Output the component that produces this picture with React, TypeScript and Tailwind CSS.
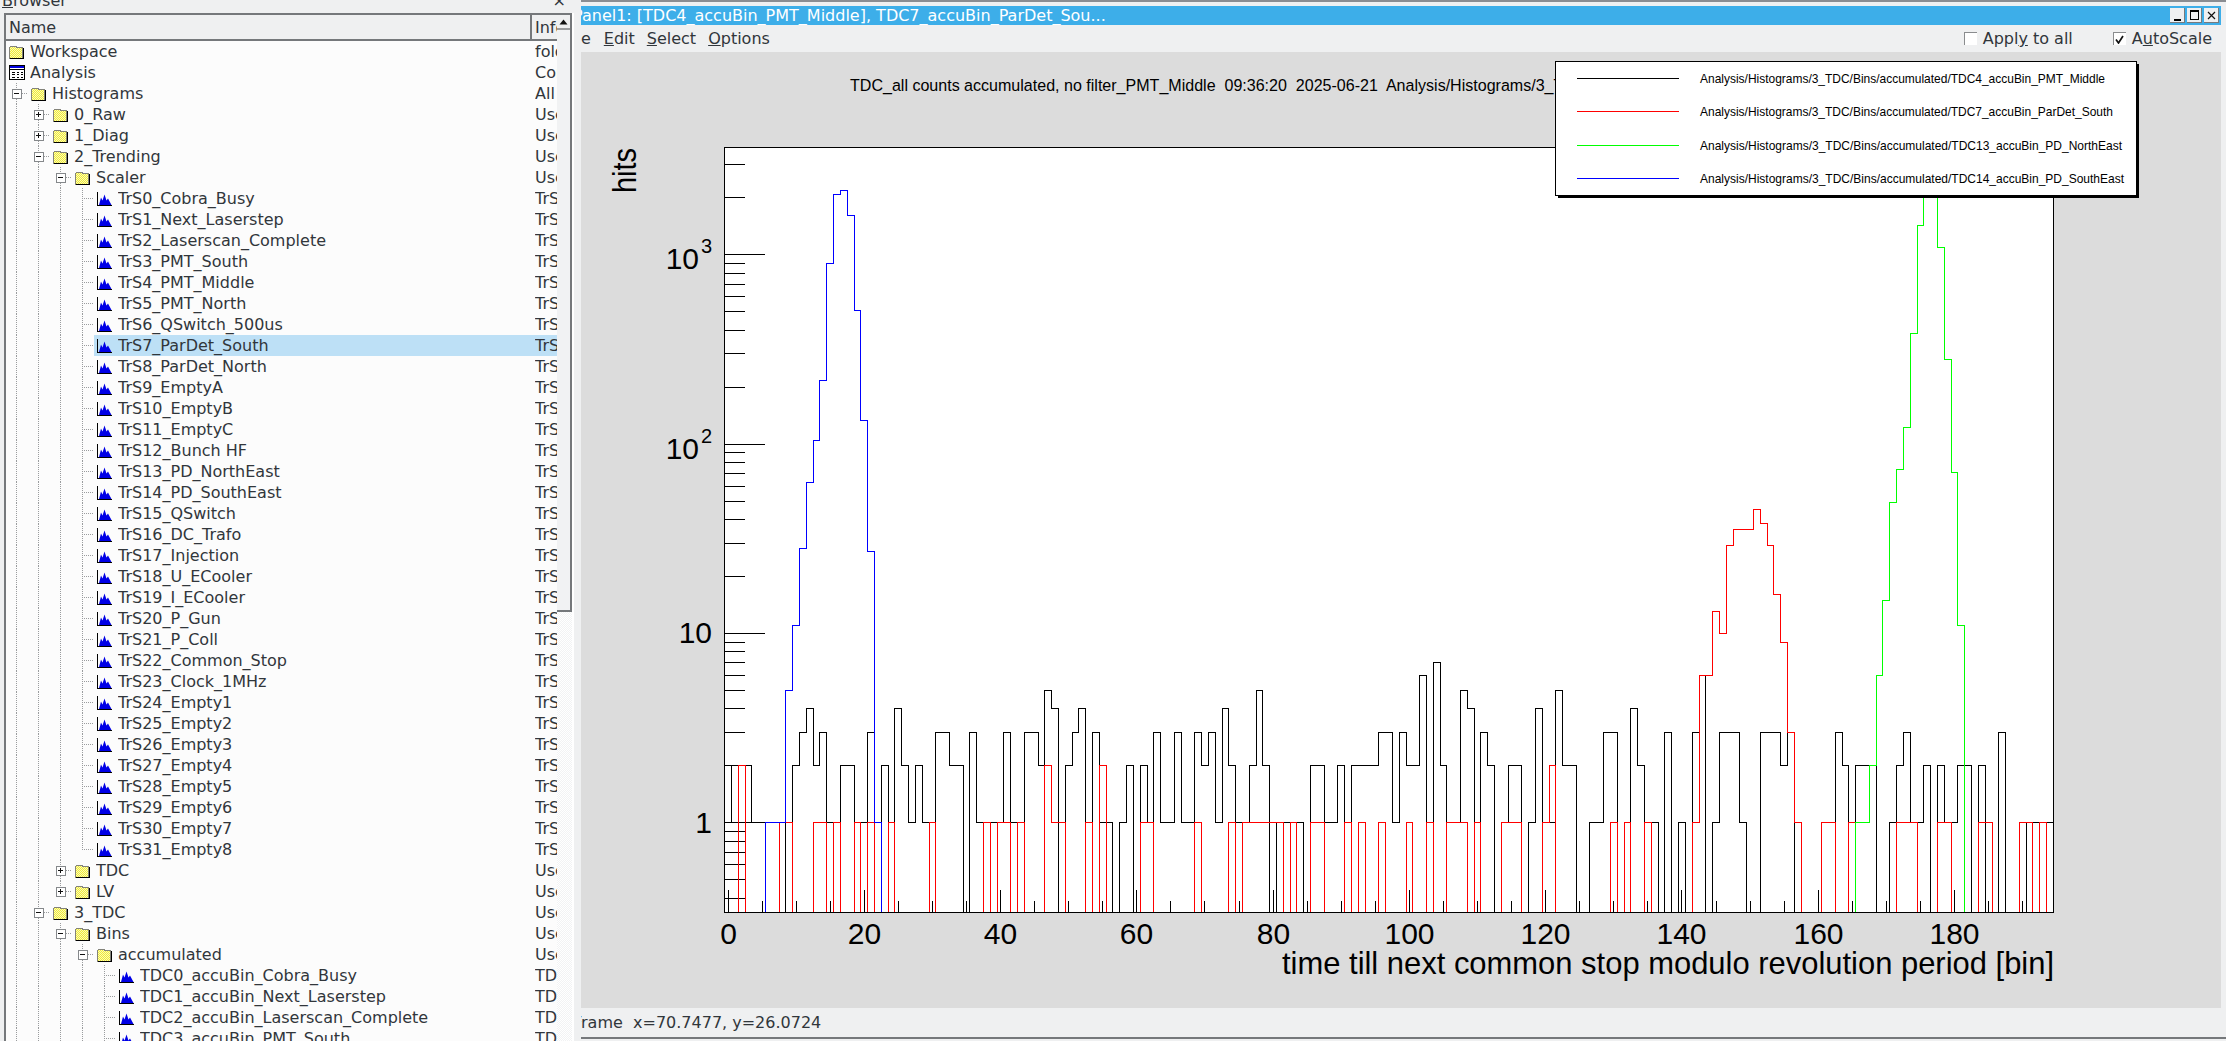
import React from "react";

type Row = { name: string; info: string; level: number; kind: "folder" | "table" | "hist"; exp?: "+" | "-"; sel?: boolean };

const trsNames = ["TrS0_Cobra_Busy","TrS1_Next_Laserstep","TrS2_Laserscan_Complete","TrS3_PMT_South","TrS4_PMT_Middle","TrS5_PMT_North","TrS6_QSwitch_500us","TrS7_ParDet_South","TrS8_ParDet_North","TrS9_EmptyA","TrS10_EmptyB","TrS11_EmptyC","TrS12_Bunch HF","TrS13_PD_NorthEast","TrS14_PD_SouthEast","TrS15_QSwitch","TrS16_DC_Trafo","TrS17_Injection","TrS18_U_ECooler","TrS19_I_ECooler","TrS20_P_Gun","TrS21_P_Coll","TrS22_Common_Stop","TrS23_Clock_1MHz","TrS24_Empty1","TrS25_Empty2","TrS26_Empty3","TrS27_Empty4","TrS28_Empty5","TrS29_Empty6","TrS30_Empty7","TrS31_Empty8"];
const tdcNames = ["TDC0_accuBin_Cobra_Busy","TDC1_accuBin_Next_Laserstep","TDC2_accuBin_Laserscan_Complete","TDC3_accuBin_PMT_South"];

const rows: Row[] = [
  { name: "Workspace", info: "folder", level: 0, kind: "folder" },
  { name: "Analysis", info: "Configuration", level: 0, kind: "table" },
  { name: "Histograms", info: "All", level: 1, kind: "folder", exp: "-" },
  { name: "0_Raw", info: "User", level: 2, kind: "folder", exp: "+" },
  { name: "1_Diag", info: "User", level: 2, kind: "folder", exp: "+" },
  { name: "2_Trending", info: "User", level: 2, kind: "folder", exp: "-" },
  { name: "Scaler", info: "User", level: 3, kind: "folder", exp: "-" },
  ...trsNames.map((n): Row => ({ name: n, info: n, level: 4, kind: "hist", sel: n === "TrS7_ParDet_South" })),
  { name: "TDC", info: "User", level: 3, kind: "folder", exp: "+" },
  { name: "LV", info: "User", level: 3, kind: "folder", exp: "+" },
  { name: "3_TDC", info: "User", level: 2, kind: "folder", exp: "-" },
  { name: "Bins", info: "User", level: 3, kind: "folder", exp: "-" },
  { name: "accumulated", info: "User", level: 4, kind: "folder", exp: "-" },
  ...tdcNames.map((n): Row => ({ name: n, info: n, level: 5, kind: "hist" })),
];

function continues(i: number, j: number) {
  for (let k = i + 1; k < rows.length; k++) {
    if (rows[k].level < j) return false;
    if (rows[k].level === j) return true;
  }
  return true;
}

function Guide({ i }: { i: number }) {
  const r = rows[i];
  if (r.level === 0) return null;
  const w = 22 * r.level;
  const lines: React.ReactNode[] = [];
  for (let j = 1; j <= r.level; j++) {
    const x = 22 * j - 12 + 0.5;
    const more = continues(i, j);
    if (j < r.level) {
      if (more) lines.push(<line key={j} x1={x} x2={x} y1={0} y2={21} />);
    } else {
      lines.push(<line key={j} x1={x} x2={x} y1={0} y2={more ? 21 : 10.5} />);
    }
  }
  const cx = 22 * r.level - 12;
  return (
    <svg width={w} height={21} className="shrink-0">
      <g stroke="#9a9c9e" strokeWidth={1} strokeDasharray="1 1" shapeRendering="crispEdges">
        {lines}
        <line x1={cx} x2={w} y1={10.5} y2={10.5} />
      </g>
      {r.exp && (
        <g shapeRendering="crispEdges">
          <rect x={cx - 4} y={6} width={9} height={9} fill="#fff" stroke="#85888b" />
          <line x1={cx - 2} x2={cx + 3} y1={10.5} y2={10.5} stroke="#111" />
          {r.exp === "+" && <line x1={cx + 0.5} x2={cx + 0.5} y1={8} y2={13} stroke="#111" />}
        </g>
      )}
    </svg>
  );
}

function FolderIcon() {
  return (
    <svg width={15} height={14} viewBox="0 0 15 14" className="shrink-0" shapeRendering="crispEdges">
      <defs>
        <pattern id="dither" width={2} height={2} patternUnits="userSpaceOnUse">
          <rect width={2} height={2} fill="#eeea3c" />
          <rect width={1} height={1} fill="#fdfbb4" />
          <rect x={1} y={1} width={1} height={1} fill="#fdfbb4" />
        </pattern>
      </defs>
      <path d="M0.5 13V2.5L2 1H6.5L8 2.5H13.5V13Z" fill="url(#dither)" stroke="#83837a" />
      <path d="M1 13.5H14.5V3" fill="none" stroke="#000" />
      <path d="M0 14H15V13H15" fill="none" stroke="#000" />
    </svg>
  );
}

function TableIcon() {
  return (
    <svg width={16} height={15} viewBox="0 0 16 15" className="shrink-0" shapeRendering="crispEdges">
      <rect x={0.5} y={0.5} width={15} height={14} fill="#fff" stroke="#000" />
      <rect x={1} y={1} width={14} height={2} fill="#0000e0" />
      <path d="M1 4.5H15M2.5 7H6M7.5 7H10M11.5 7H14M2.5 9.5H6M7.5 9.5H10M11.5 9.5H14M2.5 12H6M7.5 12H10M11.5 12H14" stroke="#000" />
    </svg>
  );
}

function HistIcon() {
  return (
    <svg width={15} height={14} viewBox="0 0 15 14" className="shrink-0">
      <path d="M2 13L4 5.5L5.5 8.5L7.5 2.5L9.5 8.5L11 6.5L14.5 13Z" fill="#0000e6" />
      <path d="M0.5 0V13.5H15" fill="none" stroke="#000" shapeRendering="crispEdges" />
    </svg>
  );
}

function TreeRow({ i }: { i: number }) {
  const r = rows[i];
  return (
    <div className="flex h-[21px] shrink-0">
      <Guide i={i} />
      <div className={"flex min-w-0 flex-1 items-center pl-[3px] " + (r.sel ? "bg-[#bde0f6]" : "")}>
        <div className="mr-[6px] flex w-[15px] shrink-0 items-center">
          {r.kind === "folder" && <FolderIcon />}
          {r.kind === "table" && <TableIcon />}
          {r.kind === "hist" && <HistIcon />}
        </div>
        <div className="min-w-0 flex-1 overflow-hidden whitespace-nowrap">{r.name}</div>
        <div className="w-[22px] shrink-0 overflow-hidden whitespace-nowrap">{r.info}</div>
      </div>
    </div>
  );
}

function Browser() {
  return (
    <div className="flex w-[581px] shrink-0 flex-col bg-[#eff0f1]">
      <div className="flex h-[13px] shrink-0 items-end justify-between overflow-hidden pl-[2px] pr-[15px] leading-[16px]">
        <span className="relative -top-[4px]"><u>B</u>rowser</span>
        <span className="relative -top-[4px]">×</span>
      </div>
      <div className="flex min-h-0 flex-1">
        <div className="ml-[4px] flex min-h-0 w-[568px] border-l-2 border-t-2 border-[#75787b]">
          <div className="flex min-h-0 w-[551px] flex-col overflow-hidden bg-[#fcfcfc]">
            <div className="flex h-[26px] shrink-0 border-b-2 border-[#75787b] bg-[#eff0f1]">
              <div className="flex w-[524px] items-center pl-[3px]">Name</div>
              <div className="flex flex-1 items-center overflow-hidden whitespace-nowrap border-l-2 border-[#75787b] pl-[3px]">Info</div>
            </div>
            {rows.map((_, i) => <TreeRow key={i} i={i} />)}
          </div>
          <div className="flex w-[15px] shrink-0 flex-col">
            <div className="flex h-[597px] shrink-0 flex-col border-b-2 border-r-2 border-[#75787b] bg-[#f1f2f3]">
              <div className="flex h-[15px] items-center justify-center border-b-2 border-[#9a9c9e] bg-[#eff0f1]">
                <svg width={9} height={6}><path d="M0.5 5.5L4.5 0.5L8.5 5.5Z" fill="#111" /></svg>
              </div>
            </div>
            <div className="flex-1 bg-[repeating-conic-gradient(#ffffff_0_25%,#f2f3f4_0_50%)] bg-[length:2px_2px]" />
          </div>
        </div>
        <div className="w-[2px] shrink-0 bg-white" />
      </div>
    </div>
  );
}

function CheckOpt({ label, under, rest, checked }: { label: string; under: string; rest: string; checked?: boolean }) {
  return (
    <div className="flex items-center gap-[6px]">
      <span className="flex h-[13px] w-[13px] items-center justify-center border-l border-t border-[#8a8c8e] bg-white">
        {checked && <svg width={9} height={9}><path d="M1 4.5L3.5 8L8 1" fill="none" stroke="#111" strokeWidth={1.7} /></svg>}
      </span>
      <span className="whitespace-pre">{label}<u>{under}</u>{rest}</span>
    </div>
  );
}

// histogram data -------------------------------------------------------------
const blackData = [2,2,2,2,1,1,1,1,1,0,2,3,4,2,3,1,1,2,2,1,
1,3,1,2,1,4,2,1,2,1,1,3,3,2,2,0,3,1,1,1,
1,3,1,1,3,3,2,5,4,0,2,3,4,1,3,1,1,0,1,2,
0,2,1,3,1,1,3,1,1,3,2,3,1,4,2,1,1,2,5,2,
0,1,1,1,1,0,2,2,1,1,2,1,2,2,2,2,3,3,1,3,
2,2,6,1,7,2,1,1,5,4,1,3,2,0,1,2,2,0,1,4,
1,1,5,2,2,0,0,1,1,3,3,0,1,4,2,1,1,0,3,0,
1,0,3,6,0,1,3,3,3,1,0,0,3,3,3,2,3,0,0,0,
0,1,1,3,2,0,2,2,2,0,0,1,2,3,1,1,2,0,2,1,
1,2,2,0,2,0,0,3,0,0,0,1,1,1,1];

const fromMap = (m: Record<number, number>) => Array.from({ length: 195 }, (_, k) => m[k] ?? 0);

const redData = fromMap({2:2,8:1,9:1,13:1,14:1,16:1,19:1,21:1,24:1,30:1,38:1,40:1,41:1,43:1,47:2,48:1,49:1,53:1,55:2,61:1,62:1,69:1,74:1,76:1,77:1,78:1,79:1,80:1,81:1,83:1,86:1,87:1,91:1,93:1,96:1,100:1,103:1,106:1,107:1,108:1,110:1,114:1,115:1,116:1,120:1,121:2,130:1,132:1,135:1,142:1,143:6,144:6,145:13,146:10,147:29,148:35.5,149:35.5,150:35.5,151:45,152:38,153:29,154:16,155:9,156:3,157:1,161:1,162:1,165:1,172:1,173:1,174:1,178:1,179:1,184:1,185:1,190:1,191:1,193:1});
const greenData = fromMap({166:1,167:1,168:2,169:6,170:15,171:49,172:73.5,173:122,174:384,175:1430,176:3500,177:3500,178:1095,179:280,180:71,181:11});
const blueData = fromMap({6:1,7:1,8:1,9:5,10:11,11:28,12:62.8,13:104,14:217,15:898,16:2082,17:2180,18:1609,19:507,20:134,21:27,22:1});

const L = 724.5, R = 2053.5, T = 147.5, B = 912.5;
const ex = (k: number) => Math.round(724.1 + 6.814 * k) + 0.5;
const yv = (v: number) => (v <= 0 ? 930 : Math.round(822.3 - 189.3 * Math.log10(v)) + 0.5);
const tx = (v: number) => Math.round(727.5 + 6.814 * v) + 0.5;

function histPath(d: number[]) {
  let p = `M${ex(0)} ${yv(d[0])}`;
  for (let k = 0; k < 195; k++) {
    p += `H${ex(k + 1)}`;
    if (k < 194) p += `V${yv(d[k + 1])}`;
  }
  return p;
}

function Chart() {
  const xTicks: React.ReactNode[] = [];
  for (let v = 0; v <= 190; v += 5) {
    const big = v % 20 === 0;
    xTicks.push(<line key={v} x1={tx(v)} x2={tx(v)} y1={B} y2={B - (big ? 23 : 12)} />);
  }
  const yTicks: React.ReactNode[] = [];
  const addY = (v: number, big: boolean) => {
    const y = yv(v);
    yTicks.push(<line key={v} x1={L} x2={L + (big ? 40 : 20)} y1={y} y2={y} />);
  };
  [0.4, 0.5, 0.6, 0.7, 0.8, 0.9].forEach((v) => addY(v, false));
  [1, 10, 100, 1000].forEach((d) => {
    addY(d, true);
    for (let m = 2; m <= 9; m++) if (d * m <= 3000) addY(d * m, false);
  });
  const labels = [0, 20, 40, 60, 80, 100, 120, 140, 160, 180];
  const legend = [
    { y: 78.5, c: "#000000", t: "Analysis/Histograms/3_TDC/Bins/accumulated/TDC4_accuBin_PMT_Middle", w: 405 },
    { y: 111.5, c: "#ff0000", t: "Analysis/Histograms/3_TDC/Bins/accumulated/TDC7_accuBin_ParDet_South", w: 413 },
    { y: 145.5, c: "#00ff00", t: "Analysis/Histograms/3_TDC/Bins/accumulated/TDC13_accuBin_PD_NorthEast", w: 422 },
    { y: 178.5, c: "#0000ff", t: "Analysis/Histograms/3_TDC/Bins/accumulated/TDC14_accuBin_PD_SouthEast", w: 424 },
  ];
  return (
    <svg viewBox="581 52 1640 956" width={1640} height={956} className="block font-['Liberation_Sans',sans-serif]">
      <rect x={581} y={52} width={1640} height={956} fill="#dcdcdc" />
      <rect x={L} y={T} width={R - L} height={B - T} fill="#fff" />
      <text x={850} y={91} fontSize={17} fill="#000" className="whitespace-pre" transform="translate(850 91) scale(0.945 1) translate(-850 -91)">
        {"TDC_all counts accumulated, no filter_PMT_Middle  09:36:20  2025-06-21  Analysis/Histograms/3_TDC/Bins/accumulated/TDC4_accuBin_PMT_Middle"}
      </text>
      <clipPath id="plot"><rect x={L} y={T} width={R - L} height={B - T} /></clipPath>
      <g stroke="#000" strokeWidth={1} shapeRendering="crispEdges">{xTicks}{yTicks}</g>
      <g clipPath="url(#plot)" fill="none" strokeWidth={1} shapeRendering="crispEdges">
        <path d={histPath(blackData)} stroke="#000" />
        <line x1={ex(1)} x2={ex(1)} y1={yv(2)} y2={yv(1)} stroke="#000" />
        <path d={histPath(redData)} stroke="#ff0000" />
        <path d={histPath(greenData)} stroke="#00ff00" />
        <path d={histPath(blueData)} stroke="#0000ff" />
      </g>
      <rect x={L} y={T} width={R - L} height={B - T} fill="none" stroke="#000" strokeWidth={1} shapeRendering="crispEdges" />
      {labels.map((v) => (
        <text key={v} x={tx(v)} y={944} fontSize={30} textAnchor="middle" fill="#000">{v}</text>
      ))}
      <text x={712} y={833} fontSize={30} textAnchor="end" fill="#000">1</text>
      <text x={712} y={643} fontSize={30} textAnchor="end" fill="#000">10</text>
      <text x={699} y={459} fontSize={30} textAnchor="end" fill="#000">10</text>
      <text x={712} y={443} fontSize={20} textAnchor="end" fill="#000">2</text>
      <text x={699} y={269} fontSize={30} textAnchor="end" fill="#000">10</text>
      <text x={712} y={253} fontSize={20} textAnchor="end" fill="#000">3</text>
      <text x={1282} y={974} fontSize={32} fill="#000" textLength={772} lengthAdjust="spacingAndGlyphs">time till next common stop modulo revolution period [bin]</text>
      <text transform="translate(636 193) rotate(-90)" fontSize={33} fill="#000" textLength={45} lengthAdjust="spacingAndGlyphs">hits</text>
      <rect x={1558} y={64} width={581} height={134} fill="#000" />
      <rect x={1555.5} y={61.5} width={581} height={134} fill="#fff" stroke="#000" shapeRendering="crispEdges" />
      {legend.map((l) => (
        <g key={l.t}>
          <line x1={1577} x2={1679} y1={l.y} y2={l.y} stroke={l.c} shapeRendering="crispEdges" />
          <text x={1700} y={l.y + 4.5} fontSize={13} fill="#000" textLength={l.w} lengthAdjust="spacingAndGlyphs">{l.t}</text>
        </g>
      ))}
    </svg>
  );
}

function WinBtn({ children }: { children: React.ReactNode }) {
  return <div className="flex h-[15px] w-[15px] items-center justify-center border-b border-r border-[#777a7d] bg-[#eff0f1]">{children}</div>;
}

function Panel() {
  return (
    <div className="flex min-w-0 flex-1 flex-col bg-[#eff0f1]">
      <div className="h-[2px] shrink-0 bg-[#8a8d92]" />
      <div className="h-[4px] shrink-0" />
      <div className="mr-[5px] flex h-[19px] shrink-0 items-center justify-between overflow-hidden bg-[#3daee9] text-white">
        <span className="-ml-[8px] whitespace-nowrap">Panel1: [TDC4_accuBin_PMT_Middle], TDC7_accuBin_ParDet_Sou...</span>
        <div className="mr-[2px] flex gap-[2px]">
          <WinBtn><span className="mt-[9px] h-[2px] w-[7px] bg-black" /></WinBtn>
          <WinBtn><span className="h-[10px] w-[9px] border border-t-2 border-black" /></WinBtn>
          <WinBtn><svg width={9} height={9}><path d="M1 1L8 8M8 1L1 8" stroke="#111" strokeWidth={1.2} /></svg></WinBtn>
        </div>
      </div>
      <div className="flex h-[27px] shrink-0 items-center justify-between overflow-hidden pr-[14px]">
        <div className="-ml-[17px] flex gap-[12px] whitespace-nowrap">
          <span className="mr-[1px]"><u>F</u>ile</span>
          <span><u>E</u>dit</span>
          <span><u>S</u>elect</span>
          <span><u>O</u>ptions</span>
        </div>
        <div className="flex gap-[40px]">
          <CheckOpt label="Appl" under="y" rest=" to all" />
          <CheckOpt label="A" under="u" rest="toScale" checked />
        </div>
      </div>
      <div className="mr-[5px] h-[956px] shrink-0"><Chart /></div>
      <div className="flex h-[29px] shrink-0 items-center overflow-hidden">
        <span className="-ml-[8px] whitespace-pre">Frame  x=70.7477, y=26.0724</span>
      </div>
      <div className="flex-1 border-t-2 border-[#75787b]" />
    </div>
  );
}

export default function App() {
  return (
    <div className="flex h-[1041px] w-[2226px] overflow-hidden bg-[#eff0f1] font-['DejaVu_Sans',sans-serif] text-[16px] leading-[21px] text-[#31363b]">
      <Browser />
      <Panel />
    </div>
  );
}
